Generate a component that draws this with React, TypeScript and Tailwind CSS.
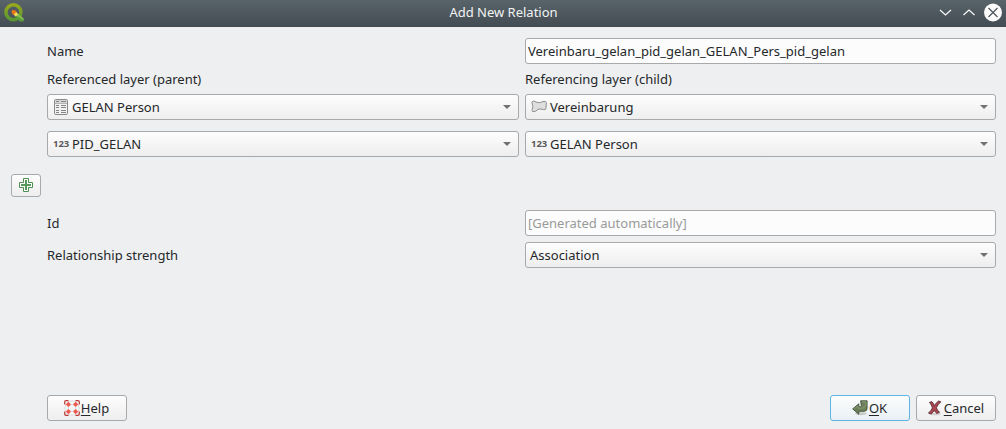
import type { ReactNode } from 'react';

function QgisLogo() {
  return (
    <svg width="22" height="22" viewBox="0 0 22 22">
      <defs>
        <linearGradient id="ring" x1="0" y1="0" x2="0" y2="1">
          <stop offset="0" stopColor="#96a91c" />
          <stop offset="1" stopColor="#589632" />
        </linearGradient>
      </defs>
      <circle cx="10.4" cy="9.3" r="7.5" fill="none" stroke="url(#ring)" strokeWidth="3.5" />
      <path d="M11.3 12.5 14.2 10 20.6 15.6V18.4H17z" fill="#589f3c" />
      <path d="M13.2 12.4 15 10.8 20.6 15.6V17z" fill="#90bd52" />
      <path d="M8.8 7.3H12.2L14.2 9.8 11.3 12.5 8.8 10.3z" fill="#ee7913" />
      <path d="M11 11.5 13.3 9.3 15.2 11.2 12.6 13.6z" fill="#f0e064" />
    </svg>
  );
}

function TableIcon() {
  return (
    <svg width="16" height="16" viewBox="0 0 16 16">
      <rect x="1.5" y=".5" width="13" height="15" rx="1.3" fill="#f1f1f1" stroke="#888" />
      <path d="M2 1h12v3H2z" fill="#d6d6d6" />
      <path d="M2 4.5h12" stroke="#b4b4b4" />
      <path
        d="M3 2.5h3M8 2.5h5M3 6.5h3M8 6.5h5M3 8.5h3M8 8.5h5M3 11.5h3M8 11.5h5M3 13.5h3M8 13.5h5"
        stroke="#858585"
      />
    </svg>
  );
}

function PolygonIcon() {
  return (
    <svg width="16" height="16" viewBox="0 0 16 16">
      <path
        d="M1.2 2.7Q2.3 1.4 4 2.5Q7 4.3 9.5 3.5Q12 2 14.5 2.4Q15.8 3.1 15.3 5L14.9 9.8Q14.3 11.2 12.3 10.5Q8.5 9.4 6.8 10.5Q4.2 13.1 2 12.7Q.4 12 1.2 10.3Q2.6 7.6 1.3 5.2Q.7 3.6 1.2 2.7z"
        fill="#dedede"
        stroke="#8f8f8f"
      />
    </svg>
  );
}

function IntegerIcon() {
  return (
    <span className="block w-4 font-['Noto_Sans'] text-[9.5px] leading-4 font-bold text-[#5b5b5b]">
      123
    </span>
  );
}

function LifebuoyIcon() {
  return (
    <svg width="16" height="16" viewBox="0 0 16 16">
      <circle cx="8" cy="8" r="5.4" fill="none" stroke="#c9c9c9" strokeWidth="4.2" />
      <circle cx="8" cy="8" r="5.4" fill="none" stroke="#f4f4f4" strokeWidth="3.2" />
      <path
        d="M1.8 4.4 4.4 1.8 7 4.4 4.4 7zM14.2 4.4 11.6 1.8 9 4.4 11.6 7zM1.8 11.6 4.4 14.2 7 11.6 4.4 9zM14.2 11.6 11.6 14.2 9 11.6 11.6 9z"
        fill="#f15a50"
      />
      <path
        d="M.7 4.5V2Q.7.7 2 .7H4.5M11.5.7H14Q15.3.7 15.3 2V4.5M.7 11.5V14Q.7 15.3 2 15.3H4.5M11.5 15.3H14Q15.3 15.3 15.3 14V11.5"
        fill="none"
        stroke="#b9383a"
        strokeWidth="1.2"
      />
    </svg>
  );
}

function ReturnIcon() {
  return (
    <svg width="16" height="16" viewBox="0 0 16 16">
      <ellipse cx="9" cy="13.6" rx="6" ry="1.6" fill="#c9cdca" />
      <path
        d="M8.6.8H15.1V8.5Q15 11.3 12 11.3H6.8V14.3L.7 8.9 6.8 3.8V6.8H8.4Q9.4 6.7 9.3 5.7z"
        fill="#6b8058"
        stroke="#43503b"
        strokeWidth=".9"
        strokeLinejoin="round"
      />
      <path d="M10 1.8H14V5.4Q13 8 10 8.2H5.9V6L2.5 8.8" fill="none" stroke="#8c9f7b" strokeWidth=".8" />
    </svg>
  );
}

function CrossIcon() {
  return (
    <svg width="16" height="16" viewBox="0 0 16 16">
      <ellipse cx="8" cy="14" rx="6" ry="1.3" fill="#d4d0d0" />
      <path
        d="M2.5 2.3 5 1.7Q6.7 3.7 7.5 5.6Q9.3 2.5 11.5 1L13.8 1.8Q10.8 4.5 9.3 7.8Q10.3 10.4 12.5 12.3L9.8 13.4Q8.2 12.1 7.4 10.4Q5.7 12.3 4.3 14L1.5 13.1Q4 10.7 5.5 7.9Q4.5 4.7 2.5 2.3z"
        fill="#ad4650"
        stroke="#572d33"
        strokeWidth=".9"
        strokeLinejoin="round"
      />
    </svg>
  );
}

function PlusIcon() {
  return (
    <svg className="mb-px" width="14" height="14" viewBox="0 0 14 14">
      <path d="M4.5.5h5v4h4v5h-4v4h-5v-4h-4v-5h4z" fill="#fff" stroke="#4f8f52" />
      <path d="M7 2v10M2 7h10" stroke="#589a5b" strokeWidth="2" />
    </svg>
  );
}

const frame = 'rounded-[3px] border border-[#a8a9aa]';

function Combo({ icon, children }: { icon?: ReactNode; children: ReactNode }) {
  return (
    <div
      className={`${frame} flex h-[26px] min-w-0 items-center bg-linear-to-b from-[#fdfdfd] to-[#eeeeee] pr-[7px] pl-1`}
    >
      {icon && <span className="mr-[3px] ml-px shrink-0">{icon}</span>}
      <span className="grow">{children}</span>
      <svg width="8" height="4" viewBox="0 0 8 4">
        <path d="M0 0h8L4 4z" fill="#707272" />
      </svg>
    </div>
  );
}

function Button({ icon, label, primary }: { icon: ReactNode; label: string; primary?: boolean }) {
  return (
    <button
      className={`flex h-[26px] w-20 items-center justify-center rounded-[3px] border bg-linear-to-b pr-px ${
        primary ? 'border-[#5eb5e5] from-[#fcfdfd] to-[#e9f0f4]' : 'border-[#a8a9aa] from-[#fdfdfd] to-[#eeeeee]'
      }`}
    >
      {icon}
      <span className="ml-px">
        <span className="underline decoration-1 underline-offset-2">{label[0]}</span>
        {label.slice(1)}
      </span>
    </button>
  );
}

export default function App() {
  return (
    <div className="flex h-[429px] w-[1006px] flex-col overflow-hidden bg-[#eeeff1] font-['Noto_Sans',sans-serif] text-[13px] leading-[18px] text-[#25282b]">
      <header className="grid h-[27px] shrink-0 grid-cols-[1fr_auto_1fr] items-center bg-linear-to-b from-[#58636a] to-[#444c53] pr-1 pl-[3px] text-[#f2f3f3]">
        <QgisLogo />
        <h1 className="translate-x-px pb-[3px]">Add New Relation</h1>
        <div className="flex items-center justify-end pb-[3px]">
          <svg width="68" height="20" viewBox="0 0 68 20" fill="none">
            <path d="m6 8 5.5 5L17 8M29.5 13l5.5-5 5.5 5" stroke="#fbfbfb" strokeWidth="1.2" />
            <circle cx="59" cy="10.5" r="9" fill="#fcfcfc" />
            <path d="m54.5 6 9 9M63.5 6l-9 9" stroke="#4c555c" strokeWidth="1.2" />
          </svg>
        </div>
      </header>

      <main className="flex grow flex-col pt-[11px] pr-[10px] pb-2 pl-[11px]">
        <section className="grid grid-cols-[472px_471px] gap-x-[6px] pl-9">
          <label className="self-center">Name</label>
          <div className={`${frame} h-[26px] bg-[#fcfcfc] px-[2px] leading-6`}>
            Vereinbaru_gelan_pid_gelan_GELAN_Pers_pid_gelan
          </div>
          <label className="mt-[6px] mb-[6px]">Referenced layer (parent)</label>
          <label className="mt-[6px] mb-[6px]">Referencing layer (child)</label>
          <Combo icon={<TableIcon />}>GELAN Person</Combo>
          <Combo icon={<PolygonIcon />}>Vereinbarung</Combo>
          <div className="col-span-2 h-[11px]" />
          <Combo icon={<IntegerIcon />}>PID_GELAN</Combo>
          <Combo icon={<IntegerIcon />}>GELAN Person</Combo>
        </section>

        <button
          aria-label="Add field pair"
          className={`${frame} mt-[17px] flex h-[23px] w-[30px] items-center justify-center bg-linear-to-b from-[#fdfdfd] to-[#eeeeee]`}
        >
          <PlusIcon />
        </button>

        <section className="mt-[13px] grid grid-cols-[472px_471px] items-center gap-x-[6px] gap-y-[6px] pl-9">
          <label>Id</label>
          <div className={`${frame} h-[26px] bg-[#fcfcfc] px-[2px] leading-6 text-[#999a9a]`}>
            [Generated automatically]
          </div>
          <label>Relationship strength</label>
          <Combo>Association</Combo>
        </section>

        <footer className="mt-auto flex gap-[6px] pl-9">
          <Button icon={<LifebuoyIcon />} label="Help" />
          <span className="grow" />
          <Button icon={<ReturnIcon />} label="OK" primary />
          <Button icon={<CrossIcon />} label="Cancel" />
        </footer>
      </main>
    </div>
  );
}
